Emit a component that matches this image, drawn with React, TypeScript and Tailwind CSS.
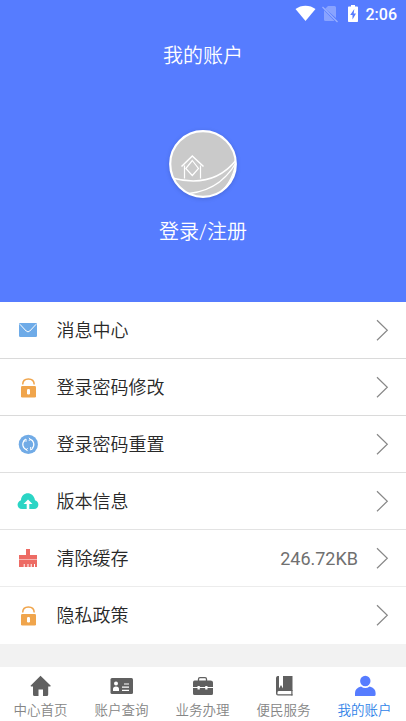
import type { ReactNode } from 'react';

function StatusBar() {
  return (
    <div className="flex h-7 items-center justify-end pr-[9px] text-white">
      <svg width="22" height="28" viewBox="0 0 22 28">
        <path d="M.5 9C6 4.500 15 4.500 20.500 9L10.500 21Z" fill="#fff" />
      </svg>
      <svg className="ml-[4px]" width="18" height="28" viewBox="0 0 18 28">
        <path d="M7 6h6.500q1.500 0 1.500 1.500V18L4.200 8.800ZM3 10.200 13.500 21H4.500Q3 21 3 19.500Z" fill="#fff" opacity=".3" />
        <path d="M1.500 7 16.500 22" stroke="#fff" strokeWidth="1.300" opacity=".4" />
      </svg>
      <svg className="ml-[8px]" width="12" height="28" viewBox="0 0 12 28">
        <path d="M4 5h4v1.500h2.200q.8 0 .8.800v13.900q0 .8-.8.800H1.800q-.8 0-.8-.8V7.300Q1 6.500 1.800 6.500H4Z" fill="#fff" />
        <path d="M7.300 9 3.200 15h2.300v4.500L9 13.500H6.700Z" fill="#567cff" />
      </svg>
      <span className="ml-[7px] pt-px text-[16px] leading-7 font-medium">2:06</span>
    </div>
  );
}

function Avatar() {
  return (
    <svg width="76" height="76" viewBox="165 126 76 76" className="drop-shadow-[0_1px_2px_rgba(0,0,0,0.15)]">
      <defs>
        <clipPath id="disc">
          <circle cx="203" cy="164" r="33" />
        </clipPath>
      </defs>
      <circle cx="203" cy="164" r="33" fill="#cacaca" />
      <g clipPath="url(#disc)" fill="none" stroke="#fff" strokeWidth="1.200">
        <path d="M181.500 166.500 192.300 156 203.500 166.500" strokeWidth="1.500" />
        <path d="M184.500 178.500V165.500M200.500 165.500V178.500" />
        <path d="M192.300 160.500 198.500 168.500 192.300 175.500 185.800 168.500Z" />
        <path d="M172 178Q214 189 237 159" strokeWidth="1.500" />
        <path d="M180 194Q219 194 237 161" />
        <path d="M212 198Q232 187 236 162M217 199Q233 187 237 166" />
      </g>
      <circle cx="203" cy="164" r="32.800" fill="none" stroke="#fff" strokeWidth="2.200" />
    </svg>
  );
}

function RowIcon({ children }: { children: ReactNode }) {
  return (
    <svg width="24" height="24" viewBox="0 0 24 24" fill="none" className="shrink-0">
      {children}
    </svg>
  );
}

const mail = (
  <RowIcon>
    <rect x="3" y="5" width="18" height="14" rx="1.200" fill="#6eabe8" />
    <path d="M3.800 6.200 10.200 13Q12 14.800 13.800 13L20.200 6.200" stroke="#fff" strokeWidth="1" />
  </RowIcon>
);

const lock = (
  <RowIcon>
    <path d="M6.700 9.500Q6.700 3.900 12.400 3.900T18.200 9.500" stroke="#f0a54c" strokeWidth="1.500" />
    <rect x="5" y="11" width="15" height="11.500" rx="1.300" fill="#f0a54c" />
    <rect x="11" y="14" width="3" height="5.500" rx="1.200" fill="#fff" />
  </RowIcon>
);

const sync = (
  <RowIcon>
    <circle cx="12.300" cy="12.400" r="9.600" fill="#71abe6" />
    <path d="M11 17.800A5.500 5.500 0 0 1 8.800 8.200M13.700 7.100A5.500 5.500 0 0 1 15.900 16.600" stroke="#fff" strokeWidth="1.200" />
    <path d="M7.500 8.500 10 7v2.800M17.200 16.400 14.700 18v-3M13 5.800l1.200 1.500-1.200 1.500M11.600 16.200l-1.200 1.500 1.200 1.400" stroke="#fff" strokeWidth="1" />
  </RowIcon>
);

const cloud = (
  <RowIcon>
    <path d="M6 20C.8 20-.2 13 5 11.200 5.500 2.200 17.500 1.600 19 11.200 24.200 13 23 20 18 20Z" fill="#2bd5c5" />
    <path d="M12 10.500 16.500 15H13.300V20H10.700V15H7.500Z" fill="#fff" />
  </RowIcon>
);

const brush = (
  <RowIcon>
    <path d="M10 3h4v6h7v4H3V9h7ZM3 14h18v7H19V18h-1v3h-2.300v-3h-1v3H12.500v-3h-1v3H8.700v-3h-1v3H3Z" fill="#ed6b64" />
    <path d="M3 13h18v1H3Z" fill="#f6b5b1" />
  </RowIcon>
);

const rows = [
  { label: '消息中心', icon: mail, line: 'border-[#dadada]' },
  { label: '登录密码修改', icon: lock, line: 'border-[#dadada]' },
  { label: '登录密码重置', icon: sync, line: 'border-[#dfdfdf]' },
  { label: '版本信息', icon: cloud, line: 'border-[#e3e3e3]' },
  { label: '清除缓存', icon: brush, value: '246.72KB', line: 'border-[#ececec]' },
  { label: '隐私政策', icon: lock, line: 'border-white' },
];

function Chevron() {
  return (
    <svg width="14" height="24" viewBox="0 0 14 24" fill="none" className="shrink-0">
      <path d="M2 2.300 12.300 12.300 2 22.300" stroke="#888" strokeWidth="1.200" />
    </svg>
  );
}

const tabs = [
  {
    label: '中心首页',
    art: (
      <path d="M12.500 1.800 22.800 11.800 22.300 12.500H20.200V20.500Q20.200 22 18.700 22H15V15.500H10.500V22H6.500Q5 22 5 20.500V12.500H3L2.500 11.800Z" />
    ),
  },
  {
    label: '账户查询',
    art: (
      <>
        <rect x="1.500" y="4" width="22.500" height="16" rx="1.500" />
        <g fill="#fff">
          <circle cx="7" cy="9.600" r="2" />
          <path d="M4 17v-2q0-2.500 3-2.500t3 2.500v2Z" />
          <path d="M15 9.500h5v1h-5ZM13 12.500h7v1.200h-7ZM13 15.800h7V17h-7Z" />
        </g>
      </>
    ),
  },
  {
    label: '业务办理',
    art: (
      <>
        <path d="M8.500 7.500V5.200Q8.500 3.700 10 3.700h5q1.500 0 1.500 1.500V7.500" fill="none" stroke="#606060" strokeWidth="1.300" />
        <path d="M4.500 6.500h16Q23 6.500 23 8.500v4.500h-5.500v-1h-2.300v1H9.800v-1H7.500v1H3V8.500Q3 6.500 4.500 6.500ZM3 14h4.500V15.500h2.300v-1.500h5.400V15.500h2.300v-1.500H23v5.500q0 1.500-1.500 1.500h-17Q3 21 3 19.500Z" />
      </>
    ),
  },
  {
    label: '便民服务',
    art: (
      <>
        <path d="M6.500 2H8v12.500l2-3.500 2 3.500V2h9.500v15H8Q6.500 17 6.500 18.300V20.300H21.500V21.500H7Q5 21.500 5 19.500V4Q5 2.500 6.500 2Z" />
        <path d="M20.300 16h1.200v5.500h-1.200Z" />
      </>
    ),
  },
  {
    label: '我的账户',
    active: true,
    art: (
      <>
        <circle cx="13.300" cy="7" r="5.200" />
        <path d="M3 22v-3q0-5 6-6.500 4.300 3 8.600 0 6 1.500 6 6.500v1.500q0 1.500-1.500 1.500Z" />
      </>
    ),
  },
];

export default function App() {
  return (
    <div className="flex h-[721px] w-[406px] flex-col overflow-hidden bg-[#f2f2f2] font-[Roboto,'Noto_Sans_CJK_SC',sans-serif]">
      <header className="h-[302px] bg-[#567cff] text-white">
        <StatusBar />
        <h1 className="h-[54px] pt-px text-center text-[20px] leading-[54px] font-[350]">我的账户</h1>
        <div className="flex flex-col items-center pt-[44px]">
          <Avatar />
          <div className="mt-[10px] text-[20px] leading-10 font-[350]">登录/注册</div>
        </div>
      </header>

      <main className="bg-white">
        {rows.map((row) => (
          <div key={row.label} className={`flex h-[57px] items-center border-b pr-[17px] pl-4 ${row.line}`}>
            {row.icon}
            <span className="ml-[16.5px] pt-[2px] text-[18px] leading-6 font-[350] text-[#282828]">{row.label}</span>
            <span className="mr-[17px] ml-auto pt-[2px] text-[18px] leading-6 text-[#707070]">{row.value}</span>
            <Chevron />
          </div>
        ))}
      </main>

      <nav className="mt-auto grid h-[54px] grid-cols-[repeat(5,81px)] bg-white pt-[7px]">
        {tabs.map((tab) => (
          <div key={tab.label} className="flex flex-col items-center">
            <svg
              width="25"
              height="24"
              viewBox="0 0 25 24"
              className={tab.active ? 'fill-[#567cff]' : 'fill-[#606060]'}
            >
              {tab.art}
            </svg>
            <span
              className={`mt-[2px] text-[13.5px] leading-5 font-[350] whitespace-nowrap ${
                tab.active ? 'text-[#2f83e8]' : 'text-[#858585]'
              }`}
            >
              {tab.label}
            </span>
          </div>
        ))}
      </nav>
    </div>
  );
}
